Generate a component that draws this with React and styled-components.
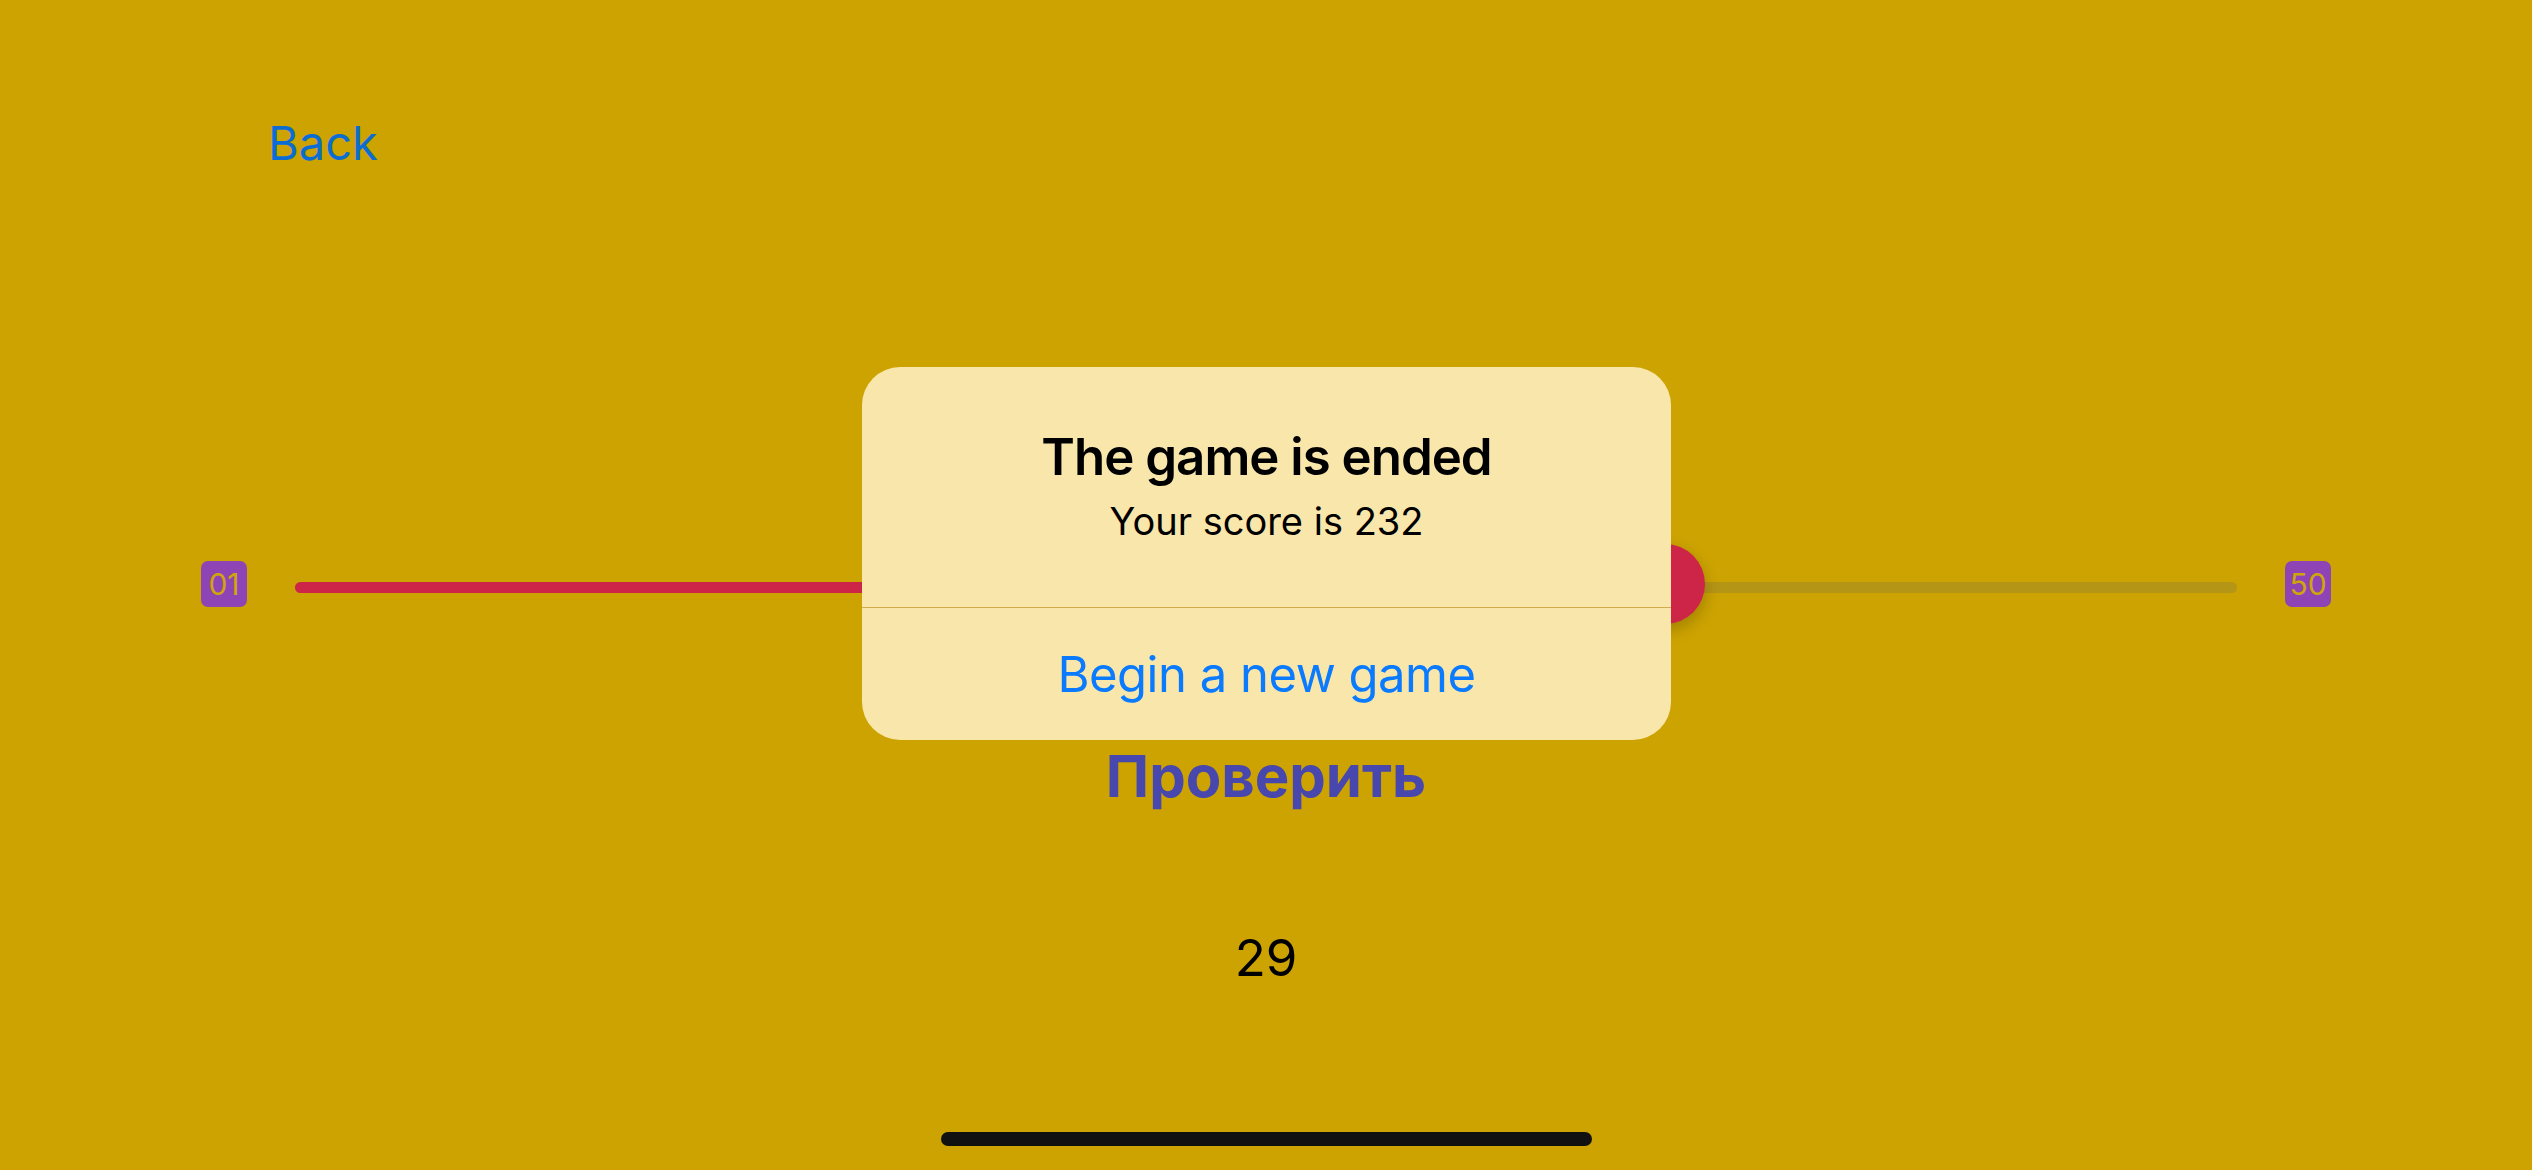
import React from 'react';
import styled, { createGlobalStyle } from 'styled-components';

const GlobalStyle = createGlobalStyle`
	html, body {
		margin: 0;
		padding: 0;
		background: #cca300;
	}
	body {
		font-family: Inter, 'Noto Sans', sans-serif;
	}
`;

const Screen = styled.div`
	position: relative;
	display: flex;
	flex-direction: column;
	width: 2532px;
	height: 1170px;
	overflow: hidden;
	background: #cca300;
`;

const BackButton = styled.button`
	align-self: flex-start;
	margin: 115px 0 0 268px;
	padding: 0;
	border: none;
	background: none;
	font-family: Inter, sans-serif;
	font-size: 47px;
	line-height: 56px;
	font-weight: 400;
	color: #0b6dd3;
	cursor: pointer;
`;

const SliderRow = styled.div`
	display: flex;
	align-items: center;
	gap: 48px;
	height: 80px;
	margin-top: 373px;
	padding: 0 201px;
`;

const Badge = styled.div`
	display: flex;
	align-items: center;
	justify-content: center;
	flex: none;
	width: 46px;
	height: 46px;
	border-radius: 7px;
	background: #8e44b4;
	color: #d0a50a;
	font-family: Inter, sans-serif;
	font-size: 30px;
	font-weight: 400;
`;

const Track = styled.div`
	position: relative;
	flex: 1;
	height: 11px;
	border-radius: 6px;
	background: #b59516;
	margin-top: 6px;
`;

const Fill = styled.div`
	position: absolute;
	left: 0;
	top: 0;
	bottom: 0;
	border-radius: 6px;
	background: #cd2548;
`;

const Thumb = styled.div`
	position: absolute;
	top: 50%;
	width: 80px;
	height: 80px;
	margin: -43px 0 0 -40px;
	border-radius: 50%;
	background: #cd2548;
	box-shadow: 0 6px 16px rgba(0, 0, 0, 0.22);
`;

const CheckButton = styled.button`
	align-self: center;
	margin-top: 117px;
	padding: 0;
	border: none;
	background: none;
	font-family: Inter, sans-serif;
	font-size: 58px;
	line-height: 70px;
	font-weight: 700;
	color: #4747ae;
`;

const Value = styled.div`
	align-self: center;
	margin-top: 116px;
	font-family: Inter, sans-serif;
	font-size: 51px;
	line-height: 62px;
	color: #000;
`;

const HomeIndicator = styled.div`
	align-self: center;
	margin: auto 0 24px;
	width: 651px;
	height: 14px;
	border-radius: 7px;
	background: #111;
`;

const Alert = styled.div`
	position: absolute;
	left: 862px;
	top: 367px;
	width: 809px;
	display: flex;
	flex-direction: column;
	border-radius: 38px;
	background: #f9e6ab;
	overflow: hidden;
	text-align: center;
`;

const AlertBody = styled.div`
	display: flex;
	flex-direction: column;
	align-items: center;
	gap: 10px;
	padding: 59px 40px 63px;
	border-bottom: 1.5px solid #d3ab4f;
`;

const AlertTitle = styled.div`
	font-family: Inter, sans-serif;
	font-size: 51px;
	line-height: 62px;
	font-weight: 600;
	letter-spacing: -1px;
	color: #000;
`;

const AlertMessage = styled.div`
	font-family: Inter, sans-serif;
	font-size: 38px;
	line-height: 46px;
	font-weight: 400;
	color: #000;
`;

const AlertAction = styled.button`
	display: flex;
	align-items: center;
	justify-content: center;
	height: 132px;
	padding: 0;
	border: none;
	background: none;
	font-family: Inter, sans-serif;
	font-size: 49px;
	font-weight: 400;
	letter-spacing: -0.5px;
	color: #0a7aff;
`;

export default function App() {
	const position = 70.55;

	return (
		<Screen>
			<GlobalStyle />
			<BackButton>Back</BackButton>
			<SliderRow>
				<Badge>01</Badge>
				<Track>
					<Fill style={{ width: `${position}%` }} />
					<Thumb style={{ left: `${position}%` }} />
				</Track>
				<Badge>50</Badge>
			</SliderRow>
			<CheckButton>Проверить</CheckButton>
			<Value>29</Value>
			<HomeIndicator />
			<Alert>
				<AlertBody>
					<AlertTitle>The game is ended</AlertTitle>
					<AlertMessage>Your score is 232</AlertMessage>
				</AlertBody>
				<AlertAction>Begin a new game</AlertAction>
			</Alert>
		</Screen>
	);
}
